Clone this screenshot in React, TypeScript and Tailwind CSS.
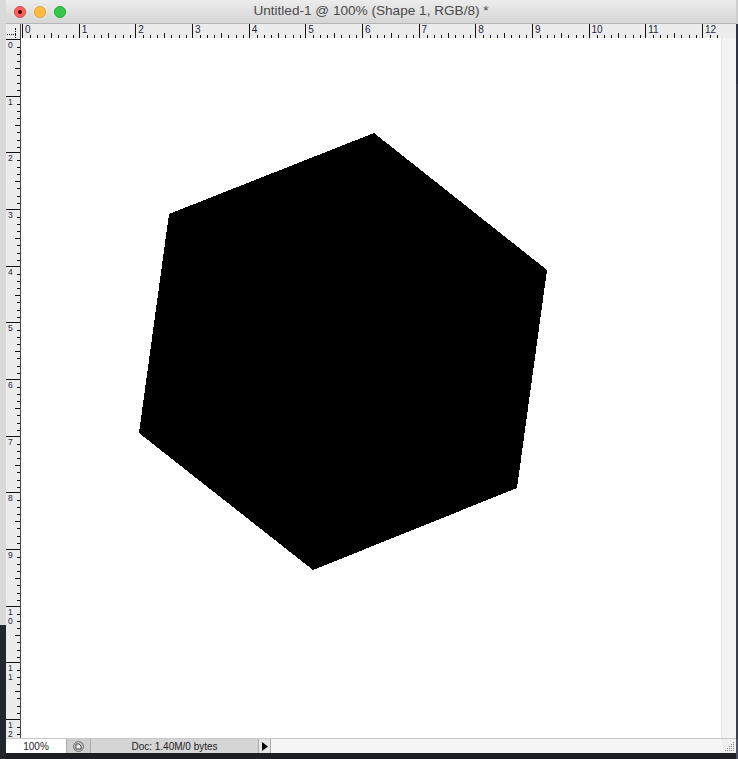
import React from "react";

const UNIT = 56.67;
const units = Array.from({ length: 13 }, (_, i) => i);

const TopTicks = () => (
  <svg width={UNIT} height={14} className="absolute left-0 top-0">
    {Array.from({ length: 7 }, (_, i) => {
      const x = Math.round((i + 1) * (UNIT / 8)) + 0.5;
      const h = i === 3 ? 5 : 3;
      return <line key={i} x1={x} x2={x} y1={14 - h} y2={14} stroke="#111" strokeWidth={1} />;
    })}
  </svg>
);

const LeftTicks = () => (
  <svg width={14} height={UNIT} className="absolute left-0 top-0">
    {Array.from({ length: 7 }, (_, i) => {
      const y = Math.round((i + 1) * (UNIT / 8)) + 0.5;
      const w = i === 3 ? 5 : 3;
      return <line key={i} y1={y} y2={y} x1={14 - w} x2={14} stroke="#111" strokeWidth={1} />;
    })}
  </svg>
);

const TopRuler = () => (
  <div className="flex h-[14px] flex-1 overflow-hidden bg-[#ececec] pl-[1px]">
    {units.map((n) => (
      <div key={n} className="relative h-full w-[56.67px] shrink-0 border-l border-[#111]">
        <TopTicks />
        <span className="relative block pl-[2px] pt-[1px] text-[10px] leading-[10px] text-[#1d2740]">{n}</span>
      </div>
    ))}
  </div>
);

// vertical ruler stacks two-digit labels one over the other
const LeftRuler = () => (
  <div className="flex w-[15px] shrink-0 flex-col overflow-hidden border-r border-[#444] bg-[#ececec] pt-[1px]">
    {units.map((n) => (
      <div key={n} className="relative w-full h-[56.67px] shrink-0 border-t border-[#111]">
        <LeftTicks />
        <span className="relative flex flex-col pl-[2px] pt-[1px] text-[8.5px] text-[#1d2740]">
          {String(n)
            .split("")
            .map((d, i) => (
              <span key={i} className="block h-[9px] leading-[9px]">
                {d}
              </span>
            ))}
        </span>
      </div>
    ))}
  </div>
);

const Hexagon = () => (
  <svg width={700} height={700} className="block" shapeRendering="crispEdges">
    <polygon points="353,95 526,232 496,450 292,532 118,395 148,176" fill="#000" />
  </svg>
);

export default function App() {
  return (
    <div
      className="flex h-[759px] w-[738px] overflow-hidden bg-[#16181d]"
      style={{ fontFamily: '"Liberation Sans", Arial, sans-serif' }}
    >
      {/* desktop strip on the left */}
      <div className="flex w-[6px] shrink-0 flex-col">
        <div className="h-[625px] bg-[#d9d9d9]" />
        <div className="flex-1 bg-[#23262c]" />
      </div>

      {/* window */}
      <div className="flex w-[730px] shrink-0 flex-col">
        {/* title bar */}
        <div className="relative flex h-[24px] shrink-0 items-center border-b border-[#b5b5b5] bg-gradient-to-b from-[#ececec] to-[#d6d6d6]">
          <div className="flex items-center gap-[8px] pl-[8px]">
            <span className="flex h-[12px] w-[12px] items-center justify-center rounded-full border border-[#e0443e] bg-[#fc605c]">
              <span className="h-[4px] w-[4px] rounded-full bg-[#4d0000]" />
            </span>
            <span className="h-[12px] w-[12px] rounded-full border border-[#dea236] bg-[#fdbc40]" />
            <span className="h-[12px] w-[12px] rounded-full border border-[#1aab29] bg-[#34c84a]" />
          </div>
          <div className="absolute inset-0 flex items-center justify-center text-[13.6px] text-[#4a4a4a]">
            Untitled-1 @ 100% (Shape 1, RGB/8) *
          </div>
        </div>

        {/* ruler row */}
        <div className="flex h-[14px] shrink-0">
          <div className="relative w-[15px] shrink-0 border-r border-[#444] bg-[#ececec]">
            <div className="absolute left-[9px] top-[4px] h-[10px] border-l border-dotted border-[#111]" />
            <div className="absolute left-[1px] top-[10px] w-[9px] border-t border-dotted border-[#111]" />
          </div>
          <TopRuler />
          <div className="w-[15px] shrink-0 bg-[#ececec]" />
        </div>

        {/* canvas area */}
        <div className="flex h-[700px] shrink-0">
          <LeftRuler />
          <div className="w-[700px] shrink-0 bg-white">
            <Hexagon />
          </div>
          <div className="flex-1 border-l border-[#e4e4e4] bg-[#f3f3f3]" />
        </div>

        {/* status bar */}
        <div className="flex h-[15px] shrink-0 items-stretch border-t border-[#c8c8c8] text-[10px] text-[#222]">
          <div className="flex w-[60px] shrink-0 items-center justify-center bg-white">100%</div>
          <div className="flex w-[24px] shrink-0 items-center justify-center border-l border-[#aaa] bg-[#cfcfcf]">
            <span className="flex h-[11px] w-[11px] items-center justify-center rounded-full border border-[#777] bg-[#bdbdbd]">
              <svg width="7" height="7" viewBox="0 0 7 7">
                <path d="M1 1 H4 L6 3 V6 H1 Z" fill="#eee" stroke="#333" strokeWidth="0.8" />
              </svg>
            </span>
          </div>
          <div className="flex w-[168px] shrink-0 items-center justify-center border-l border-[#aaa] bg-[#d5d5d5]">
            Doc: 1.40M/0 bytes
          </div>
          <div className="flex w-[13px] shrink-0 items-center justify-center border-x border-[#aaa] bg-[#e6e6e6]">
            <svg width="6" height="9" viewBox="0 0 6 9">
              <path d="M0 0 L6 4.5 L0 9 Z" fill="#000" />
            </svg>
          </div>
          <div className="flex-1 bg-[#f5f5f5]" />
          <div className="flex w-[14px] shrink-0 items-end justify-end bg-[#f0f0f0] pb-[1px] pr-[1px]">
            <svg width="11" height="11" viewBox="0 0 11 11">
              {[
                [9, 1],
                [7, 3], [9, 3],
                [5, 5], [7, 5], [9, 5],
                [3, 7], [5, 7], [7, 7], [9, 7],
                [1, 9], [3, 9], [5, 9], [7, 9], [9, 9],
              ].map(([x, y], i) => (
                <rect key={i} x={x} y={y} width="1" height="1" fill="#888" />
              ))}
            </svg>
          </div>
        </div>

        <div className="flex-1 bg-[#1b1e24]" />
      </div>

      {/* desktop strip on the right */}
      <div className="flex flex-1 flex-col bg-[#262b33]">
        <div className="h-[24px] bg-[#cfcfcf]" />
        <div className="h-[60px] bg-[#2f3542]" />
        <div className="flex-1 bg-[#3a404b]" />
        <div className="h-[20px] bg-[#4a5060]" />
      </div>
    </div>
  );
}
